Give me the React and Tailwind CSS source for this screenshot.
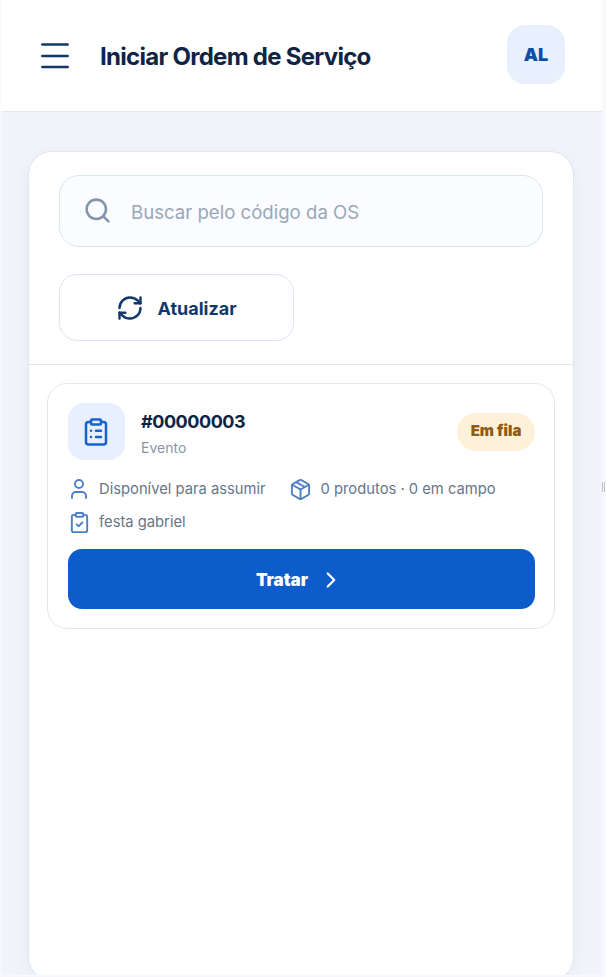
import React from "react";
import { Search, RefreshCw, ClipboardList, User, Package, ClipboardCheck, ChevronRight } from "lucide-react";

export default function App() {
  return (
    <div className="relative h-[977px] w-[606px] overflow-hidden bg-[#f8f9fe] font-['Inter',sans-serif]">
      <div className="ml-px flex h-[975px] w-[601px] flex-col overflow-hidden bg-[#f1f5fa]">
        <header className="flex h-[112px] shrink-0 items-center border-b border-[#e1e6ef] bg-white pl-10 pr-[36px]">
          <svg width="28" height="26" viewBox="0 0 28 26" fill="none" stroke="#12386b" strokeWidth="2.7" strokeLinecap="round" className="shrink-0">
            <path d="M1.4 1.5H26.6M1.4 13H26.6M1.4 24H26.6" />
          </svg>
          <h1 className="ml-[31px] mt-[2px] flex-1 text-[24px] font-bold leading-8 tracking-[-0.72px] text-[#0f2445]">Iniciar Ordem de Serviço</h1>
          <div className="flex h-[59px] w-[58px] -translate-x-px -translate-y-px items-center justify-center rounded-[18px] bg-[#e8f0fe] text-[18px] font-black text-[#0f4fa3]">AL</div>
        </header>
        <main className="flex-1 pl-[27px] pr-[28px] pt-[39px]">
          <section className="h-[830px] rounded-[24px] border border-[#dfe6f0] bg-white shadow-[0_4px_20px_rgba(15,36,69,0.05)]">
            <div className="px-[30px] pt-[23px]">
              <div className="flex h-[72px] items-center rounded-[20px] border border-[#dbe5f1] bg-[#fafcff] pl-[23px]">
                <Search size={29} strokeWidth={2.1} className="mb-[2px] shrink-0 text-[#8494a9]" />
                <span className="ml-[19px] mt-[4px] text-[18.6px] text-[#9aa7b9]">Buscar pelo código da OS</span>
              </div>
              <button className="mt-[27px] flex h-[67px] w-[235px] items-center justify-center gap-[13px] rounded-[18px] border border-[#dbe5f1] bg-white">
                <RefreshCw size={28} strokeWidth={2.1} className="text-[#12386b]" />
                <span className="mt-[2px] text-[18px] font-bold text-[#12386b]">Atualizar</span>
              </button>
            </div>
            <div className="mt-[23px] border-t border-[#e1e6ef] px-[18px] pt-[18px]">
              <article className="h-[246px] rounded-[20px] border border-[#e1e8f0] bg-white pl-5 pr-[19px] pt-[19px]">
                <div className="flex items-center">
                  <div className="flex h-[57px] w-[57px] shrink-0 items-center justify-center rounded-[16px] bg-[#e8f0fe]">
                    <ClipboardList size={30} strokeWidth={2} className="mr-px text-[#1a62cd]" />
                  </div>
                  <div className="ml-4 flex-1 pt-1">
                    <div className="text-[18px] font-bold leading-7 tracking-[-0.45px] text-[#0f2445]">#00000003</div>
                    <div className="mt-px text-[14px] leading-[22px] text-[#8a94a6]">Evento</div>
                  </div>
                  <span className="flex h-[38px] w-[78px] items-center justify-center rounded-full bg-[#fff1d9] text-[15px] font-black text-[#8f5a12]">Em fila</span>
                </div>
                <div className="mt-[16px] flex items-center text-[14.75px] leading-[26px] text-[#66758a]">
                  <User size={24} strokeWidth={1.9} className="-ml-px text-[#4f80c2]" />
                  <span className="ml-[8px]">Disponível para assumir</span>
                  <Package size={23} strokeWidth={2} className="ml-[23px] text-[#4f80c2]" />
                  <span className="ml-[9px]">0 produtos · 0 em campo</span>
                </div>
                <div className="mt-[7px] flex items-center text-[14.75px] leading-[26px] text-[#66758a]">
                  <ClipboardCheck size={23} strokeWidth={2} className="text-[#4f80c2]" />
                  <span className="ml-[8px]">festa gabriel</span>
                </div>
                <button className="mt-[14px] flex h-[60px] w-full items-center justify-center gap-[10px] rounded-[14px] bg-[#0d5ccb] pr-[3px] pt-[2px] text-[17px] font-black text-white">
                  <span className="mt-[2px]">Tratar</span>
                  <ChevronRight size={26} strokeWidth={2} />
                </button>
              </article>
            </div>
          </section>
        </main>
      </div>
      <span className="absolute left-[602px] top-[482px] h-[10px] w-[3px] border-x border-[#b9bec6]" />
    </div>
  );
}
